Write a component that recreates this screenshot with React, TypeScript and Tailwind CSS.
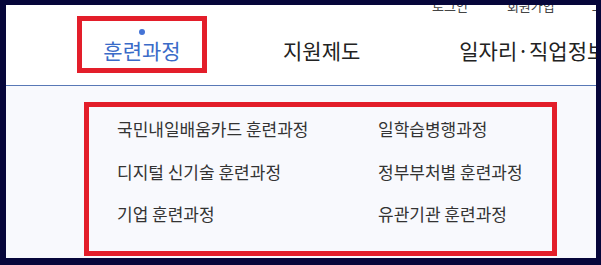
import React from 'react';

const menuItems = [
    '국민내일배움카드 훈련과정',
    '일학습병행과정',
    '디지털 신기술 훈련과정',
    '정부부처별 훈련과정',
    '기업 훈련과정',
    '유관기관 훈련과정',
];

export default function App() {
    return (
        <div className="w-[601px] h-[265px] bg-[#06063a] pt-[5px] pl-[6px] pr-[5px] pb-[7px] font-['Noto_Sans_CJK_KR',sans-serif]">
            <div className="h-full bg-white flex flex-col overflow-hidden">
                {/* Header */}
                <header className="h-[81px] shrink-0 border-b border-[#5878b6] bg-white">
                    {/* Utility links (cut off at top) */}
                    <div className="flex h-[13px] mt-[-6px] text-[13px] leading-none text-[#444] whitespace-nowrap">
                        <span className="ml-[426px]">로그인</span>
                        <span className="ml-[39px]">회원가입</span>
                        <span className="ml-[37px]">고객센터</span>
                    </div>

                    {/* Main navigation */}
                    <nav className="flex items-start mt-[4px] pl-[71px] whitespace-nowrap">
                        <div className="w-[130px] h-[57px] shrink-0 border-[5px] border-[#e31e2a] flex flex-col items-center pt-[8px]">
                            <span className="w-[6px] h-[6px] rounded-full bg-[#4574d6]" />
                            <span className="mt-[5px] text-[21px] leading-[21px] text-[#3a6bc8]">훈련과정</span>
                        </div>
                        <span className="ml-[76px] pt-[24px] text-[21px] leading-[21px] text-[#222]">지원제도</span>
                        <span className="ml-[99px] pt-[24px] text-[21px] leading-[21px] text-[#222]">일자리·직업정보</span>
                    </nav>
                </header>

                {/* Dropdown panel */}
                <div className="flex-1 bg-[#f8f9fd] pt-[16px] pl-[78px]">
                    <div className="w-[473px] h-[154px] border-[5px] border-[#e31e2a] pt-[13px] pl-[28px]">
                        <ul className="grid grid-cols-[261px_auto] gap-y-[25.5px] text-[17px] leading-[17px] text-[#333]">
                            {menuItems.map((item) => (
                                <li key={item} className="whitespace-nowrap">{item}</li>
                            ))}
                        </ul>
                    </div>
                </div>
            </div>
        </div>
    );
}
